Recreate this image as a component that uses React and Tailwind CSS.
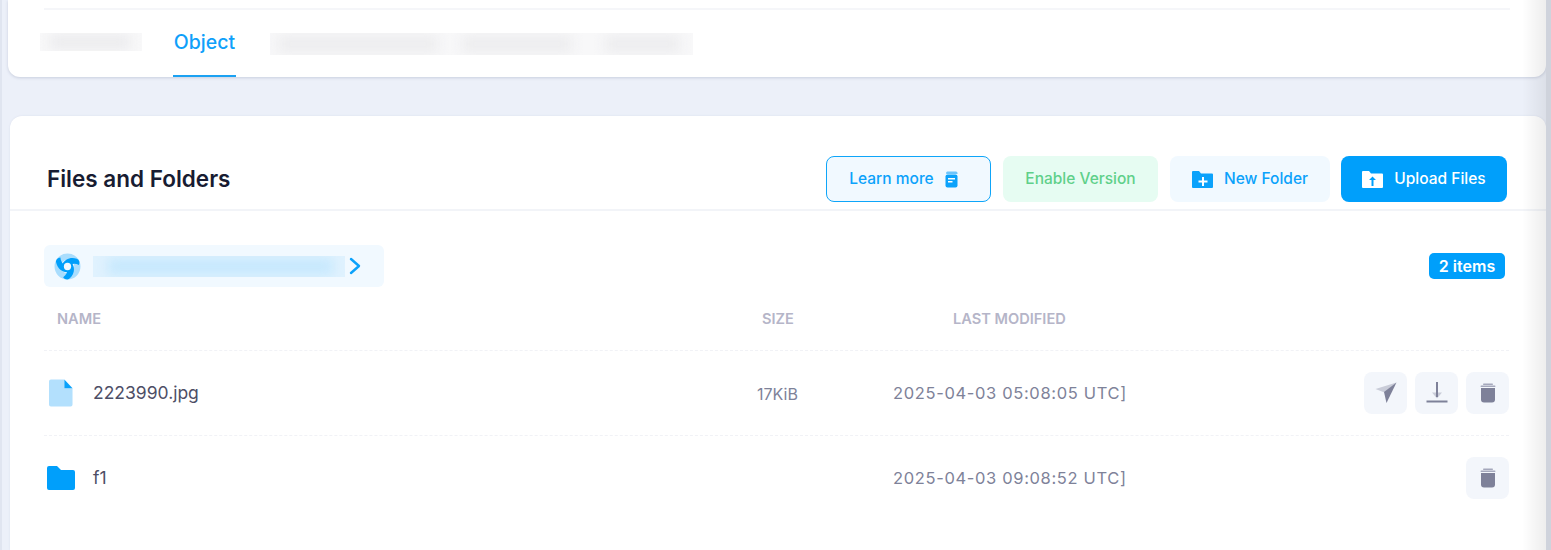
import React from "react";

// blurred-out text from the screenshot: pale box with soft blobs clipped inside
const Shade = ({ className, blobClass, blobs }) => (
  <div className={`overflow-hidden relative ${className}`}>
    {blobs.map((b, i) => (
      <div
        key={i}
        className={`absolute top-[2px] bottom-[2px] blur-[6px] ${blobClass}`}
        style={{ left: b[0], width: b[1] }}
      />
    ))}
  </div>
);

const ActionButton = ({ children }) => (
  <button className="w-[43px] h-[42px] rounded-lg bg-[#f3f6fb] flex items-center justify-center">
    {children}
  </button>
);

const TrashIcon = () => (
  <svg width="16" height="20" viewBox="0 0 16 20">
    <rect x="3" y="0.5" width="10" height="1.5" rx="0.7" fill="#a5a8bc" />
    <rect x="0.5" y="2.6" width="15" height="1.4" rx="0.7" fill="#a5a8bc" />
    <path d="M1 5h14v11.5a3 3 0 0 1-3 3H4a3 3 0 0 1-3-3z" fill="#7e8199" />
  </svg>
);

const SendIcon = () => (
  <svg width="22" height="22" viewBox="0 0 22 22">
    <path d="M21.500 0.500 0.500 7l9 3.500z" fill="#c9ccd8" />
    <path d="M21.500 0.500 9 10l2.500 11z" fill="#7e8199" />
  </svg>
);

const DownloadIcon = () => (
  <svg width="22" height="22" viewBox="0 0 22 22">
    <path d="M6 10.500h10l-5 6z" fill="#c9ccd8" />
    <rect x="10" y="0" width="2" height="15" fill="#7e8199" />
    <rect x="0.500" y="18.500" width="21" height="2" fill="#7e8199" />
  </svg>
);

const BLADE = "M8 11C10 6 16 3.500 22 5.500c2.500 1 3 3.500 2 6-4-2-9-1-11 2-1.500 1.500-6 0-5-2.500z";

const Logo = () => (
  <svg width="27" height="27" viewBox="0 0 26 26">
    <circle cx="13" cy="13" r="9.500" fill="none" stroke="#a9ddfd" strokeWidth="6" />
    {[0, 120, 240].map((r) => (
      <path key={r} d={BLADE} fill="#009ffb" transform={`rotate(${r} 13 13)`} />
    ))}
    <circle cx="13" cy="13" r="3.500" fill="#f1f9ff" />
  </svg>
);

const FileRow = ({ icon, name, size, modified, actions }) => (
  <div className="flex items-center h-[85px] border-b border-dashed border-[#f1f2f6] last:border-transparent">
    <div className="w-[49px] flex">{icon}</div>
    <div className="w-[664px] text-[17.5px] text-[#4d4e66] pt-[1px]">{name}</div>
    <div className="w-[136px] text-[16px] text-[#7e8299] pt-[1px]">{size}</div>
    <div className="text-[16.5px] text-[#7e8299] tracking-[0.65px] pt-[1px]">{modified}</div>
    <div className="ml-auto flex gap-[8px]">{actions}</div>
  </div>
);

export default function App() {
  return (
    <div className="relative h-[550px] overflow-hidden bg-[#ecf0f9] font-['Inter',sans-serif] flex">
      <div className="w-[2px] bg-[#e0e5f0]" />
      <div className="flex-1 min-w-0">
        {/* Tabs card */}
        <div className="ml-[6px] h-[77px] bg-white rounded-b-xl shadow-[0_1px_3px_rgba(120,130,160,0.3)] px-[36px] pt-[8px]">
          <div className="border-t-2 border-[#f5f6f9] h-[69px] flex items-stretch">
            <div className="w-[129px] pt-[23px]">
              <Shade
                className="-ml-[4px] w-[102px] h-[18px] bg-[#f8f8f9]"
                blobClass="bg-[#ebebed]"
                blobs={[[10, 80]]}
              />
            </div>
            <div className="w-[63px] border-b-2 border-[#1ba1f2] text-[19.5px] font-medium text-[#0fa0fa] text-center pt-[18px] whitespace-nowrap">
              Object
            </div>
            <div className="pl-[34px] pt-[23px]">
              <Shade
                className="w-[423px] h-[22px] bg-[#f8f8f9]"
                blobClass="bg-[#ededef]"
                blobs={[[8, 160], [192, 110], [335, 75]]}
              />
            </div>
          </div>
        </div>

        {/* Files card */}
        <div className="ml-2 mt-[39px] h-[434px] bg-white rounded-t-xl shadow-[0_0_2px_rgba(120,130,160,0.15)]">
          <div className="h-[95px] border-b-2 border-[#f2f4f8] flex items-center justify-between pl-[37px] pr-[39px] pt-[40px] pb-[7px]">
            <h2 className="text-[22.5px] font-semibold text-[#181c32]">Files and Folders</h2>
            <div className="flex gap-[12px] text-[15.5px] font-medium">
              <button className="w-[165px] h-[46px] rounded-lg border border-[#0ea5f9] bg-[#f1f9ff] text-[#0ba2fb] flex items-center justify-center gap-[11px] pr-[10px]">
                Learn more
                <svg width="13" height="17" viewBox="0 0 13 17">
                  <path d="M3 0.500h8a1.500 1.500 0 0 1 1.500 1.500v1H1.500A1.500 1.500 0 0 1 3 0.500z" fill="#6cc4fb" />
                  <rect x="0.500" y="3.500" width="12" height="13" rx="2" fill="#0ba2fb" />
                  <rect x="3" y="7" width="7" height="1.500" fill="#fff" />
                  <rect x="3" y="10" width="4.500" height="1.500" fill="#fff" />
                </svg>
              </button>
              <button className="w-[155px] h-[46px] rounded-lg bg-[#e6fcf2] text-[#5fd08a]">Enable Version</button>
              <button className="w-[160px] h-[46px] rounded-lg bg-[#f1f9ff] text-[#0ba2fb] flex items-center justify-center gap-[11px]">
                <svg width="21" height="17" viewBox="0 0 21 17">
                  <path d="M0 1a1 1 0 0 1 1-1h6l2 2.500h11a1 1 0 0 1 1 1V16a1 1 0 0 1-1 1H1a1 1 0 0 1-1-1z" fill="#0ba2fb" />
                  <path d="M10 6h2v3.500h3.500v2H12V15h-2v-3.500H6.500v-2H10z" fill="#fff" />
                </svg>
                New Folder
              </button>
              <button className="-ml-[1px] w-[166px] h-[46px] rounded-lg bg-[#009ffb] text-white flex items-center justify-center gap-[11px]">
                <svg width="21" height="17" viewBox="0 0 21 17">
                  <path d="M0 1a1 1 0 0 1 1-1h6l2 2.500h11a1 1 0 0 1 1 1V16a1 1 0 0 1-1 1H1a1 1 0 0 1-1-1z" fill="#fff" />
                  <path d="M10.500 5.500 14 9h-2.500v6h-2V9H7z" fill="#009ffb" />
                </svg>
                Upload Files
              </button>
            </div>
          </div>

          <div className="pl-[34px] pr-[37px]">
            {/* Breadcrumb */}
            <div className="flex items-center justify-between pt-[34px]">
              <div className="w-[340px] h-[42px] rounded-md bg-[#f1f9ff] flex items-center pl-[10px]">
                <Logo />
                <Shade
                  className="ml-[12px] w-[252px] h-[21px] bg-[#e0f2fe]"
                  blobClass="bg-[#c6e8fd]"
                  blobs={[[15, 225]]}
                />
                <svg className="ml-[4px]" width="12" height="18" viewBox="0 0 12 18" fill="none">
                  <path d="M2 2l8 7-8 7" stroke="#0ba2fb" strokeWidth="2.400" strokeLinecap="round" strokeLinejoin="round" />
                </svg>
              </div>
              <span className="mr-[4px] w-[76px] h-[26px] rounded-[5px] bg-[#009ffb] text-white text-[16px] font-semibold flex items-center justify-center pb-[1px]">
                2 items
              </span>
            </div>

            {/* Table header */}
            <div className="flex items-center h-[64px] pt-[2px] border-b border-dashed border-[#f1f2f6] text-[14.6px] font-semibold text-[#b5b5c8]">
              <div className="w-[718px] pl-[13px]">NAME</div>
              <div className="w-[191px]">SIZE</div>
              <div>LAST MODIFIED</div>
            </div>

            <FileRow
              icon={
                <svg width="24" height="28" viewBox="0 0 25 28" className="ml-[5px]">
                  <path d="M2 0h14v9h8.500v17a2 2 0 0 1-2 2H2a2 2 0 0 1-2-2V2a2 2 0 0 1 2-2z" fill="#b3e0fd" />
                  <path d="M16 0l8.500 9H16z" fill="#0ba2fb" />
                </svg>
              }
              name="2223990.jpg"
              size="17KiB"
              modified="2025-04-03 05:08:05 UTC]"
              actions={
                <>
                  <ActionButton><SendIcon /></ActionButton>
                  <ActionButton><DownloadIcon /></ActionButton>
                  <ActionButton><TrashIcon /></ActionButton>
                </>
              }
            />
            <FileRow
              icon={
                <svg width="28" height="24" viewBox="0 0 28 24" className="ml-[3px]">
                  <path d="M0 2a2 2 0 0 1 2-2h8l4 4h12a2 2 0 0 1 2 2v16a2 2 0 0 1-2 2H2a2 2 0 0 1-2-2z" fill="#009ffb" />
                </svg>
              }
              name="f1"
              size=""
              modified="2025-04-03 09:08:52 UTC]"
              actions={<ActionButton><TrashIcon /></ActionButton>}
            />
          </div>
        </div>
      </div>

      {/* Right edge: shadow of the neighbouring panel */}
      <div className="w-[5px] bg-[#cfd3dc]" />
      <div className="absolute top-0 bottom-0 right-[5px] w-[24px] bg-gradient-to-r from-transparent to-black/[0.07] pointer-events-none" />
    </div>
  );
}
